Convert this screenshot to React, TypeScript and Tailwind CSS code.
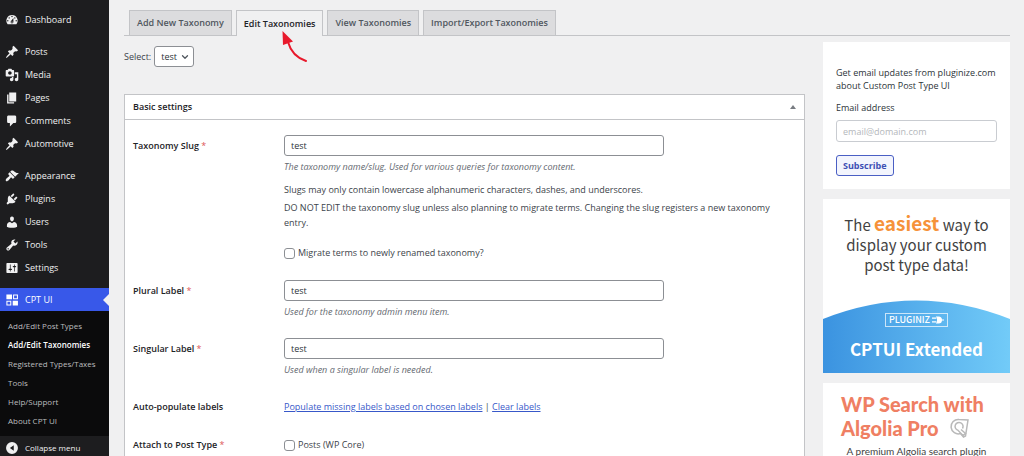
import type { ReactNode } from "react";
import { ChevronDown } from "lucide-react";

type MenuItem = {
    title: string;
    icon: string;
};

const icons = {
    dashboard:
        "M3.76 16h12.48A7.998 7.998 0 0 0 10 3a7.998 7.998 0 0 0-6.24 13zM10 4c.55 0 1 .45 1 1s-.45 1-1 1-1-.45-1-1 .45-1 1-1zM6 6c.55 0 1 .45 1 1s-.45 1-1 1-1-.45-1-1 .45-1 1-1zm8 0c.55 0 1 .45 1 1s-.45 1-1 1-1-.45-1-1 .45-1 1-1zm-5.37 5.55L12 7v6c0 1.1-.9 2-2 2s-2-.9-2-2c0-.57.24-1.08.63-1.45zM4 10c.55 0 1 .45 1 1s-.45 1-1 1-1-.45-1-1 .45-1 1-1zm12 0c.55 0 1 .45 1 1s-.45 1-1 1-1-.45-1-1 .45-1 1-1zm-5 3c0-.55-.45-1-1-1s-1 .45-1 1 .45 1 1 1 1-.45 1-1z",
    post: "M10.44 3.02l1.82-1.82 6.36 6.35-1.83 1.82c-1.05-.68-2.48-.57-3.41.36l-.75.75c-.92.93-1.04 2.35-.35 3.41l-1.83 1.82-2.41-2.41-2.8 2.79c-.42.42-3.38 2.71-3.8 2.29s1.86-3.39 2.28-3.81l2.79-2.79L4.1 9.36l1.83-1.82c1.05.69 2.48.57 3.4-.36l.75-.75c.93-.92 1.05-2.35.36-3.41z",
    media: "M13 11V4c0-.55-.45-1-1-1h-1.67L9 1H5L3.67 3H2c-.55 0-1 .45-1 1v7c0 .55.45 1 1 1h10c.55 0 1-.45 1-1zM7 4.5c1.38 0 2.5 1.12 2.5 2.5S8.38 9.5 7 9.5 4.5 8.38 4.5 7 5.62 4.5 7 4.5zM14 6h5v10.5c0 1.38-1.12 2.5-2.5 2.5S14 17.88 14 16.5s1.12-2.5 2.5-2.5c.17 0 .34.02.5.05V9h-3V6zm-4 8.05V13h2v3.5c0 1.38-1.12 2.5-2.5 2.5S7 17.88 7 16.5 8.12 14 9.5 14c.17 0 .34.02.5.05z",
    page: "M6 15V2h10v13H6zm-1 1h8v2H3V5h2v11z",
    comments:
        "M5 2h9c1.1 0 2 .9 2 2v7c0 1.1-.9 2-2 2h-2l-5 5v-5H5c-1.1 0-2-.9-2-2V4c0-1.1.9-2 2-2z",
    appearance:
        "M14.48 11.06L7.41 3.99l1.5-1.5c.5-.56 2.3-.47 3.51.32 1.21.8 1.43 1.28 2.91 2.1 1.18.64 2.45 1.26 4.45.85zm-.71.71L6.7 4.7 4.93 6.47c-.39.39-.39 1.02 0 1.41l1.06 1.06c.39.39.39 1.03 0 1.42-.6.6-1.43 1.11-2.21 1.69-.35.26-.7.53-1.01.84C1.43 14.23.4 16.08 1.4 17.07c.99 1 2.84-.03 4.18-1.36.31-.31.58-.66.85-1.02.57-.78 1.08-1.61 1.69-2.21.39-.39 1.02-.39 1.41 0l1.06 1.06c.39.39 1.02.39 1.41 0z",
    plugins:
        "M13.11 4.36L9.87 7.6 8 5.73l3.24-3.24c.35-.34 1.05-.2 1.56.32.52.51.66 1.21.31 1.55zm-8 1.77l.91-1.12 9.01 9.01-1.19.84c-.71.71-2.63 1.16-3.82 1.16H6.14L4.9 17.26c-.59.59-1.54.59-2.12 0-.59-.58-.59-1.53 0-2.12l1.24-1.24v-3.88c0-1.13.4-3.19 1.09-3.89zm7.26 3.97l3.24-3.24c.34-.35 1.04-.21 1.55.31.52.51.66 1.21.31 1.55l-3.24 3.25z",
    users: "M10 9.25c-2.27 0-2.73-3.44-2.73-3.44C7 4.02 7.82 2 9.97 2c2.16 0 2.98 2.02 2.71 3.81 0 0-.41 3.44-2.68 3.44zm0 2.57L12.72 10c2.39 0 4.52 2.33 4.52 4.53v2.49s-3.65 1.13-7.24 1.13c-3.65 0-7.24-1.13-7.24-1.13v-2.49c0-2.25 1.94-4.48 4.47-4.48z",
    tools: "M16.68 9.77c-1.34 1.34-3.3 1.67-4.95.99l-5.41 6.52c-.99.99-2.59.99-3.58 0s-.99-2.59 0-3.57l6.52-5.42c-.68-1.65-.35-3.61.99-4.95 1.28-1.28 3.12-1.62 4.72-1.06l-2.89 2.89 2.82 2.82 2.86-2.87c.53 1.58.18 3.39-1.08 4.65zM3.81 16.21c.4.39 1.04.39 1.43 0 .4-.4.4-1.04 0-1.43-.39-.4-1.03-.4-1.43 0-.39.39-.39 1.03 0 1.43z",
    settings:
        "M18 16V4c0-.55-.45-1-1-1H3c-.55 0-1 .45-1 1v12c0 .55.45 1 1 1h14c.55 0 1-.45 1-1zM8 11h1c.55 0 1 .45 1 1s-.45 1-1 1H8v1.5c0 .28-.22.5-.5.5s-.5-.22-.5-.5V13H6c-.55 0-1-.45-1-1s.45-1 1-1h1V5.5c0-.28.22-.5.5-.5s.5.22.5.5V11zm5-2h-1c-.55 0-1-.45-1-1s.45-1 1-1h1V5.5c0-.28.22-.5.5-.5s.5.22.5.5V7h1c.55 0 1 .45 1 1s-.45 1-1 1h-1v5.5c0 .28-.22.5-.5.5s-.5-.22-.5-.5V9z",
    cptui: "M2 2h8v7H2zM11.5 2h7v7h-7zm1.5 1.5v4h4v-4zM2 11h7v7H2zm1.5 1.5v4h4v-4zM11 11h7.5v7H11z",
    collapse:
        "M10 1.5a8.5 8.5 0 1 0 0 17a8.5 8.5 0 0 0 0-17zM12.5 6v8L7 10z",
};

const menuGroups: MenuItem[][] = [
    [{ title: "Dashboard", icon: icons.dashboard }],
    [
        { title: "Posts", icon: icons.post },
        { title: "Media", icon: icons.media },
        { title: "Pages", icon: icons.page },
        { title: "Comments", icon: icons.comments },
        { title: "Automotive", icon: icons.post },
    ],
    [
        { title: "Appearance", icon: icons.appearance },
        { title: "Plugins", icon: icons.plugins },
        { title: "Users", icon: icons.users },
        { title: "Tools", icon: icons.tools },
        { title: "Settings", icon: icons.settings },
    ],
];

const submenu = [
    "Add/Edit Post Types",
    "Add/Edit Taxonomies",
    "Registered Types/Taxes",
    "Tools",
    "Help/Support",
    "About CPT UI",
];

const tabs = [
    "Add New Taxonomy",
    "Edit Taxonomies",
    "View Taxonomies",
    "Import/Export Taxonomies",
];

const Icon = ({ path }: { path: string }) => (
    <svg
        className="size-[14px] shrink-0 fill-current"
        viewBox="0 0 20 20"
        fillRule="evenodd"
        aria-hidden="true"
    >
        <path d={path} />
    </svg>
);

const Sidebar = () => (
    <nav className="flex w-[109px] shrink-0 flex-col bg-[#1d1d1f] pt-2 text-[#f0f0f1]">
        <div className="flex flex-col gap-[9px]">
            {menuGroups.map((group, index) => (
                <ul key={index}>
                    {group.map((item) => (
                        <li key={item.title}>
                            <a
                                className="flex h-[23px] items-center gap-[6px] pl-[5px]"
                                href="#"
                            >
                                <Icon path={item.icon} />
                                {item.title}
                            </a>
                        </li>
                    ))}
                </ul>
            ))}
            <div>
                <a
                    className="relative flex h-[23px] items-center gap-[6px] bg-[#3858e9] pl-[5px] text-white"
                    href="#"
                >
                    <Icon path={icons.cptui} />
                    CPT UI
                    <span className="absolute top-[6px] right-0 border-y-6 border-r-6 border-y-transparent border-r-[#f0f0f1]" />
                </a>
                <ul className="bg-[#0b0b0c] pt-[5px] pb-[6px] text-[8px] text-[#bcbdbf]">
                    {submenu.map((item) => (
                        <li key={item}>
                            <a
                                className={`flex h-[19px] items-center pl-2 whitespace-nowrap ${
                                    item === "Add/Edit Taxonomies"
                                        ? "font-semibold text-white"
                                        : ""
                                }`}
                                href="#"
                            >
                                {item}
                            </a>
                        </li>
                    ))}
                </ul>
            </div>
        </div>
        <button className="flex h-6 shrink-0 items-center gap-[6px] pl-[5px] text-[8px]">
            <Icon path={icons.collapse} />
            Collapse menu
        </button>
    </nav>
);

const Tabs = () => (
    <div className="flex h-[26px] shrink-0 gap-1 border-b border-[#c3c4c7] pl-[5px] font-semibold">
        {tabs.map((tab) => {
            const active = tab === "Edit Taxonomies";
            return (
                <a
                    className={`relative flex items-center border border-b-0 border-[#c3c4c7] px-[7px] whitespace-nowrap ${
                        active
                            ? "-mb-px bg-[#f0f0f1] text-[#1d2327]"
                            : "bg-[#dcdcde] text-[#50575e]"
                    }`}
                    href="#"
                    key={tab}
                >
                    {tab}
                    {active && (
                        <svg
                            className="absolute top-5 left-11 h-8 w-7"
                            viewBox="0 0 28 32"
                            aria-hidden="true"
                        >
                            <path
                                d="M7 11C9.5 20 16 27 25 30"
                                fill="none"
                                stroke="#e8192c"
                                strokeWidth="2"
                                strokeLinecap="round"
                            />
                            <path d="M1.5 0L12 10.5L2 14Z" fill="#e8192c" />
                        </svg>
                    )}
                </a>
            );
        })}
    </div>
);

type RowProps = {
    label: string;
    htmlFor?: string;
    required?: boolean;
    children: ReactNode;
};

const Row = ({ label, htmlFor, required, children }: RowProps) => (
    <div className="flex">
        <label
            className="w-[151px] shrink-0 pt-[3px] leading-4 font-semibold text-[#1d2327]"
            htmlFor={htmlFor}
        >
            {label}
            {required && <span className="font-normal text-[#dd5558]"> *</span>}
        </label>
        <div className="min-w-0 flex-1">{children}</div>
    </div>
);

const TextField = ({ id, help }: { id: string; help: string }) => (
    <>
        <input
            className="block h-[21px] w-full max-w-[380px] rounded-[3px] border border-[#8c8f94] bg-white px-[6px] text-[#2c3338]"
            id={id}
            type="text"
            defaultValue="test"
        />
        <p className="mt-[3px] leading-[15px] text-[#646970] italic">{help}</p>
    </>
);

const Checkbox = ({ id, label }: { id: string; label: string }) => (
    <div className="flex h-4 items-center gap-[3px]">
        <input
            className="size-[11px] shrink-0 appearance-none rounded-[3px] border border-[#8c8f94] bg-white"
            id={id}
            type="checkbox"
        />
        <label htmlFor={id}>{label}</label>
    </div>
);

const Settings = () => (
    <section className="min-h-[380px] border border-[#c3c4c7] bg-white text-[#3c434a]">
        <div className="flex h-[25px] items-center justify-between border-b border-[#c3c4c7] px-2">
            <h2 className="font-semibold text-[#1d2327]">Basic settings</h2>
            <button className="text-[#787c82]" aria-label="Toggle panel">
                <svg className="h-1 w-[6px] fill-current" viewBox="0 0 6 4">
                    <path d="M3 0L6 4H0Z" />
                </svg>
            </button>
        </div>
        <form className="px-2 pt-[15px]">
            <Row label="Taxonomy Slug" htmlFor="slug" required>
                <TextField
                    id="slug"
                    help="The taxonomy name/slug. Used for various queries for taxonomy content."
                />
                <p className="mt-2 leading-[15px]">
                    Slugs may only contain lowercase alphanumeric characters,
                    dashes, and underscores.
                </p>
                <p className="mt-[3px] mb-[15px] leading-[15px]">
                    DO NOT EDIT the taxonomy slug unless also planning to
                    migrate terms. Changing the slug registers a new taxonomy
                    entry.
                </p>
                <Checkbox
                    id="migrate"
                    label="Migrate terms to newly renamed taxonomy?"
                />
            </Row>
            <div className="mt-[19px] flex flex-col gap-[19px]">
                <Row label="Plural Label" htmlFor="plural" required>
                    <TextField
                        id="plural"
                        help="Used for the taxonomy admin menu item."
                    />
                </Row>
                <Row label="Singular Label" htmlFor="singular" required>
                    <TextField
                        id="singular"
                        help="Used when a singular label is needed."
                    />
                </Row>
                <Row label="Auto-populate labels">
                    <p className="pt-[3px] leading-4">
                        <a className="text-[#3858c9] underline" href="#">
                            Populate missing labels based on chosen labels
                        </a>{" "}
                        |{" "}
                        <a className="text-[#3858c9] underline" href="#">
                            Clear labels
                        </a>
                    </p>
                </Row>
                <Row label="Attach to Post Type" htmlFor="posts" required>
                    <div className="pt-[3px]">
                        <Checkbox id="posts" label="Posts (WP Core)" />
                    </div>
                </Row>
            </div>
        </form>
    </section>
);

const Newsletter = () => (
    <form className="bg-white px-[13px] pt-6 pb-[13px] text-[#2c3338]">
        <p className="leading-[13px]">
            Get email updates from pluginize.com about Custom Post Type UI
        </p>
        <label className="mt-[9px] block leading-[13px]" htmlFor="email">
            Email address
        </label>
        <input
            className="mt-[6px] block h-[22px] w-full rounded-[3px] border border-[#c9ccd1] px-[6px] placeholder:text-[#b4b7bb]"
            id="email"
            type="email"
            placeholder="email@domain.com"
        />
        <button
            className="mt-[13px] block h-[21px] rounded-[3px] border border-[#4a5fc4] bg-[#f3f5fd] px-[6px] font-bold text-[#3e50b4]"
            type="button"
        >
            Subscribe
        </button>
    </form>
);

const ExtendedBanner = () => (
    <a
        className="flex flex-col bg-white pt-[14px] text-center font-['Noto_Sans_CJK_SC',sans-serif] text-[15px] leading-5 text-[#424242]"
        href="#"
    >
        <span>
            The <b className="text-[19px] text-[#f6923a]">easiest</b> way to
            <br />
            display your custom
            <br />
            post type data!
        </span>
        <span className="relative mt-[25px] flex h-[73px] flex-col items-center pt-[13px] text-white">
            <svg
                className="absolute inset-0 size-full"
                viewBox="0 0 187 73"
                preserveAspectRatio="none"
                aria-hidden="true"
            >
                <defs>
                    <linearGradient id="sky" x1="0" x2="1">
                        <stop offset="0" stopColor="#3b93e0" />
                        <stop offset="1" stopColor="#72cbf8" />
                    </linearGradient>
                </defs>
                <path d="M0 19Q93 -18 187 19V73H0Z" fill="url(#sky)" />
            </svg>
            <span className="relative flex h-[14px] items-center gap-[2px] border border-white/70 px-[3px] text-[9px] font-medium">
                PLUGINIZ
                <svg className="h-2 w-3" viewBox="0 0 12 8" aria-hidden="true">
                    <path
                        d="M0 2.2H4.5M0 5.8H4.5M9 4H12"
                        stroke="#fff"
                        strokeWidth="1.2"
                    />
                    <path
                        d="M4 0.5H6.5A3.5 3.5 0 0 1 6.5 7.5H4V6.5H5V1.5H4Z"
                        fill="#fff"
                    />
                </svg>
            </span>
            <b className="relative mt-3 text-[17px]">CPTUI Extended</b>
        </span>
    </a>
);

const AlgoliaBanner = () => (
    <a
        className="block bg-white px-[18px] pt-[9px] pb-4 font-[Lato,sans-serif] text-[20px] leading-6 font-black text-[#ef7f63]"
        href="#"
    >
        <span className="block whitespace-nowrap">WP Search with</span>
        <span className="flex items-center gap-[10px] whitespace-nowrap">
            Algolia Pro
            <svg
                className="size-5"
                viewBox="0 0 20 20"
                fill="none"
                stroke="#b9b9b9"
                strokeWidth="1.5"
                aria-hidden="true"
            >
                <path d="M10 1.5L19 2L16.5 18L14.5 19L11.5 15.5A7.2 7.2 0 1 1 10 1.5Z" />
                <path d="M13.5 10.5A4 4 0 1 0 9 12.3L14 17.5L16.5 15.5L12 11.5" />
            </svg>
        </span>
        <span className="mt-[3px] block text-center text-[10px] leading-4 font-normal whitespace-nowrap text-[#444]">
            A premium Algolia search plugin
        </span>
    </a>
);

const App = () => (
    <div className="flex h-screen overflow-hidden bg-[#f0f0f1] font-['Open_Sans',sans-serif] text-[9px]">
        <Sidebar />
        <main className="flex min-w-0 flex-1 flex-col pt-[10px] pr-[14px] pl-[15px]">
            <Tabs />
            <div className="flex items-start gap-[18px]">
                <div className="min-w-0 flex-1">
                    <div className="mt-[10px] mb-[27px] flex items-center gap-[3px] text-[#3c434a]">
                        <label htmlFor="taxonomy">Select:</label>
                        <div className="relative">
                            <select
                                className="block h-[21px] w-10 appearance-none rounded-[3px] border border-[#8c8f94] bg-white pl-[6px] text-[#2c3338]"
                                id="taxonomy"
                            >
                                <option>test</option>
                            </select>
                            <ChevronDown
                                className="pointer-events-none absolute top-[6px] right-1 size-[10px] text-[#50575e]"
                                strokeWidth={3}
                            />
                        </div>
                    </div>
                    <Settings />
                </div>
                <aside className="mt-[6px] flex w-[187px] shrink-0 flex-col gap-[10px]">
                    <Newsletter />
                    <ExtendedBanner />
                    <AlgoliaBanner />
                </aside>
            </div>
        </main>
    </div>
);

export default App;
